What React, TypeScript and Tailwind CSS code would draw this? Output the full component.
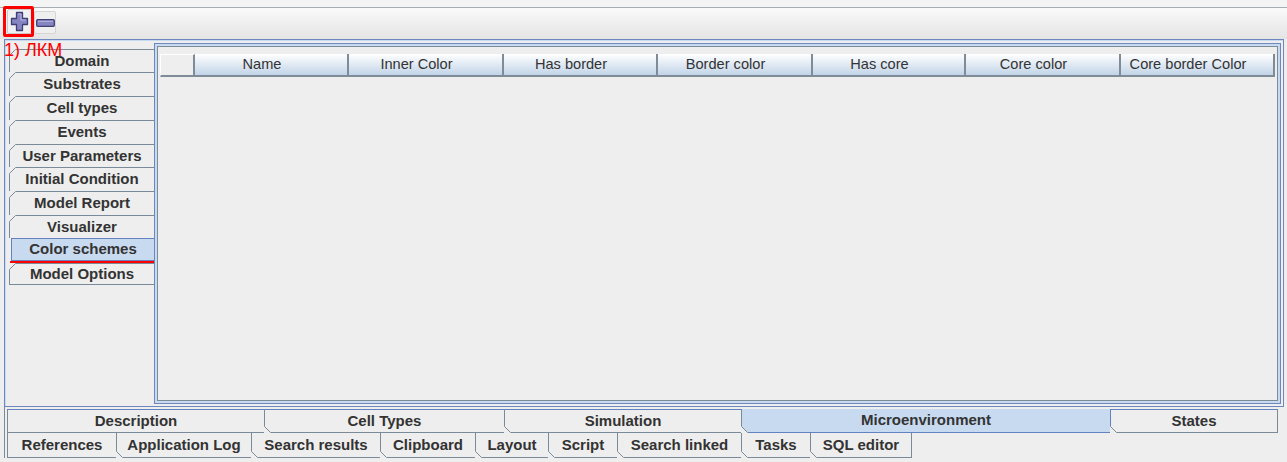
import clsx from "clsx";

const leftTabs = [
  { label: "Domain", h: "h-[23px]" },
  { label: "Substrates", h: "h-[24px]" },
  { label: "Cell types", h: "h-[24px]" },
  { label: "Events", h: "h-[24px]" },
  { label: "User Parameters", h: "h-[23px]" },
  { label: "Initial Condition", h: "h-[24px]" },
  { label: "Model Report", h: "h-[24px]" },
  { label: "Visualizer", h: "h-[23px]" },
];

const columns = [
  { label: "Name", w: "w-[154px]" },
  { label: "Inner Color", w: "w-[155px]" },
  { label: "Has border", w: "w-[154px]" },
  { label: "Border color", w: "w-[155px]" },
  { label: "Has core", w: "w-[153px]" },
  { label: "Core color", w: "w-[155px]" },
  { label: "Core border Color", w: "w-[154px]" },
];

const rowOne = [
  { label: "Description", w: "w-[258px]" },
  { label: "Cell Types", w: "w-[240px]" },
  { label: "Simulation", w: "w-[237px]" },
  { label: "Microenvironment", w: "w-[369px]", selected: true },
  { label: "States", w: "w-[167px]" },
];

const rowTwo = [
  { label: "References", w: "w-[110px]" },
  { label: "Application Log", w: "w-[135px]" },
  { label: "Search results", w: "w-[129px]" },
  { label: "Clipboard", w: "w-[95px]" },
  { label: "Layout", w: "w-[73px]" },
  { label: "Script", w: "w-[69px]" },
  { label: "Search linked", w: "w-[124px]" },
  { label: "Tasks", w: "w-[69px]" },
  { label: "SQL editor", w: "w-[101px]" },
];

function NotchTop() {
  return (
    <svg className="absolute left-[-1px] top-[-1px]" width="7" height="7">
      <polygon points="0,0 7,0 0,7" fill="#eeeeee" />
      <line x1="0.5" y1="6.5" x2="6.5" y2="0.5" stroke="#7a8a99" />
    </svg>
  );
}

function NotchBottom() {
  return (
    <svg className="absolute bottom-[-1px] left-[-1px]" width="7" height="7">
      <polygon points="0,0 0,7 7,7" fill="#eeeeee" />
      <line x1="0.5" y1="0.5" x2="6.5" y2="6.5" stroke="#7a8a99" />
    </svg>
  );
}

function SideTab({ label, h }: { label: string; h: string }) {
  return (
    <div
      className={clsx(
        "relative flex w-[145px] shrink-0 items-center justify-center border-t border-l border-[#7a8a99] text-[15px] font-bold text-[#333333]",
        h
      )}
    >
      <NotchTop />
      {label}
    </div>
  );
}

function BottomTab({
  label,
  w,
  selected,
  first,
  top,
}: {
  label: string;
  w: string;
  selected?: boolean;
  first?: boolean;
  top?: boolean;
}) {
  return (
    <div
      className={clsx(
        "relative flex h-[24px] shrink-0 items-center justify-center border-r border-b text-[15px] font-bold text-[#333333]",
        w,
        first && "border-l",
        top && !selected && "border-t border-t-[#6382bf]",
        !top && "h-[25px]",
        selected ? "border-[#6382bf] bg-[#c8daf0]" : "border-[#7a8a99] bg-[#eeeeee]"
      )}
    >
      {!first && <NotchBottom />}
      {label}
    </div>
  );
}

export default function App() {
  return (
    <div
      className="relative h-[462px] w-[1287px] overflow-hidden bg-[#eeeeee]"
      style={{ fontFamily: '"Liberation Sans", Arial, sans-serif' }}
    >
      {/* top strip + toolbar */}
      <div className="h-[8px] border-b border-[#a8adb3] bg-[#f4f4f4]" />
      <div className="flex h-[31px] items-start gap-[2px] bg-gradient-to-b from-[#fafafa] to-[#e4e4e4] pl-[7px] pt-[1px]">
        <div className="flex h-[25px] w-[25px] items-center justify-center rounded-[2px] border border-[#c9c9c9] bg-[#f1f1f1]">
          <svg width="19" height="21" viewBox="0 0 19 21">
            <path
              d="M6.5 1.5 H12.5 V7.5 H17.5 V13.5 H12.5 V19.5 H6.5 V13.5 H1.5 V7.5 H6.5 Z"
              fill="#8585c2"
              stroke="#3f3f74"
              strokeWidth="1.3"
              strokeLinejoin="round"
            />
            <path d="M8 3 H11 V9 H16" fill="none" stroke="#b8b8e4" strokeWidth="1" />
          </svg>
        </div>
        <div className="mt-[2px] flex h-[23px] w-[22px] items-center justify-center rounded-[2px] border border-[#d4d4d4] bg-[#efefef]">
          <svg width="19" height="8" viewBox="0 0 19 8">
            <rect x="0.7" y="0.7" width="17.6" height="6.6" rx="1" fill="#8585c2" stroke="#3f3f74" strokeWidth="1.3" />
            <line x1="2" y1="2.3" x2="17" y2="2.3" stroke="#b8b8e4" />
          </svg>
        </div>
      </div>

      {/* main panel */}
      <div className="ml-[4px] flex h-[368px] w-[1280px] border border-[#6f87bf] shadow-[inset_1px_1px_0_#c8daf0]">
        <div className="flex w-[149px] shrink-0 flex-col pl-[4px] pt-[9px]">
          {leftTabs.map((t) => (
            <SideTab key={t.label} label={t.label} h={t.h} />
          ))}
          <div className="relative ml-[2px] flex h-[23px] w-[143px] shrink-0 items-center justify-center border border-r-0 border-[#6382bf] bg-[#c8daf0] text-[15px] font-bold text-[#333333]">
            Color schemes
          </div>
          <div className="ml-[1px] h-[2px] w-[144px] bg-[#ff0000]" />
          <div className="relative flex h-[22px] w-[145px] shrink-0 items-center justify-center border-y border-l border-[#7a8a99] text-[15px] font-bold text-[#333333]">
            <NotchTop />
            Model Options
          </div>
        </div>

        <div className="mt-[3px] mb-[2px] mr-[2px] flex-1 border border-[#6f87bf] bg-[#c8daf0] p-[2px]">
          <div className="h-full border border-[#7e8c9a] bg-[#eeeeee] px-[2px] pt-[7px]">
            <div className="flex h-[23px]">
              <div className="w-[35px] shrink-0 border-t border-l border-r-2 border-b-2 border-t-white border-l-white border-r-[#7f8b97] border-b-[#7f8b97] bg-[#eeeeee]" />
              {columns.map((c) => (
                <div
                  key={c.label}
                  className={clsx(
                    "flex shrink-0 items-center justify-center border-r-2 border-b-2 border-[#7f8b97] bg-gradient-to-b from-white to-[#c2d4e8] pr-[18px] text-[14.6px] text-[#333333]",
                    c.w
                  )}
                >
                  {c.label}
                </div>
              ))}
            </div>
          </div>
        </div>
      </div>

      {/* bottom tabs */}
      <div className="ml-[4px] flex flex-col border-l border-[#7a8a99] pl-[2px] pt-[2px]">
        <div className="flex">
          {rowOne.map((t, i) => (
            <BottomTab key={t.label} label={t.label} w={t.w} selected={t.selected} first={i === 0} top />
          ))}
        </div>
        <div className="flex">
          {rowTwo.map((t, i) => (
            <BottomTab key={t.label} label={t.label} w={t.w} first={i === 0} />
          ))}
        </div>
      </div>

      {/* annotations */}
      <div className="absolute left-[3px] top-[6px] h-[31px] w-[31px] rounded-[2px] border-[3px] border-[#ff0000]" />
      <div className="absolute left-[4px] top-[41px] text-[18px] leading-none text-[#ff0000]">1) ЛКМ</div>
    </div>
  );
}
